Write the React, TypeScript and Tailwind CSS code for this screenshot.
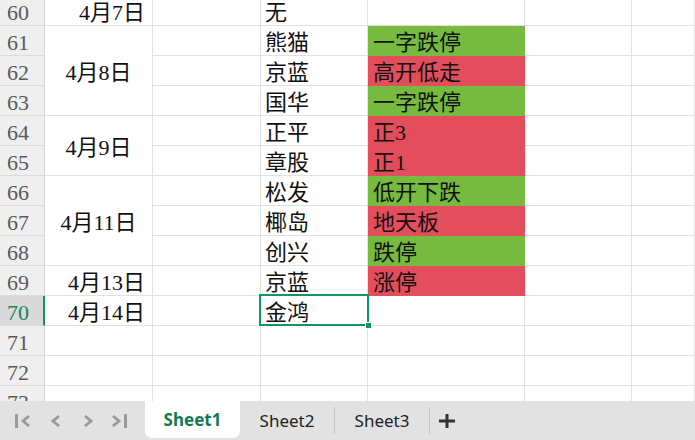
import React from "react";

type Fill = "g" | "r";
type Row = {
  n: number;
  b?: string;
  bSpan?: 1 | 2 | 3;
  bSkip?: boolean;
  d?: string;
  e?: [string, Fill];
  sel?: boolean;
};

const rows: Row[] = [
  { n: 60, b: "4月7日", d: "无" },
  { n: 61, b: "4月8日", bSpan: 3, d: "熊猫", e: ["一字跌停", "g"] },
  { n: 62, bSkip: true, d: "京蓝", e: ["高开低走", "r"] },
  { n: 63, bSkip: true, d: "国华", e: ["一字跌停", "g"] },
  { n: 64, b: "4月9日", bSpan: 2, d: "正平", e: ["正3", "r"] },
  { n: 65, bSkip: true, d: "章股", e: ["正1", "r"] },
  { n: 66, b: "4月11日", bSpan: 3, d: "松发", e: ["低开下跌", "g"] },
  { n: 67, bSkip: true, d: "椰岛", e: ["地天板", "r"] },
  { n: 68, bSkip: true, d: "创兴", e: ["跌停", "g"] },
  { n: 69, b: "4月13日", d: "京蓝", e: ["涨停", "r"] },
  { n: 70, b: "4月14日", d: "金鸿", sel: true },
  { n: 71 },
  { n: 72 },
  { n: 73 },
];

const spanCls: Record<number, string> = {
  1: "",
  2: "row-span-2",
  3: "row-span-3",
};

const fillCls: Record<Fill, string> = {
  g: "bg-[#76bb40] border-r-[#76bb40] border-b-[#76bb40]",
  r: "bg-[#e44d5c] border-r-[#e44d5c] border-b-[#e44d5c]",
};

const cell =
  "border-r border-b border-[#e1e1e1] flex items-center pt-[4px] text-[22px] leading-[22px] text-[#111] whitespace-nowrap overflow-hidden";

function FirstIcon() {
  return (
    <svg width="15" height="14" viewBox="0 0 15 14">
      <rect x="0" y="0" width="3" height="14" fill="#9a9a9a" />
      <polyline points="14,2 8,7 14,12" fill="none" stroke="#9a9a9a" strokeWidth="2.8" />
    </svg>
  );
}
function PrevIcon() {
  return (
    <svg width="9" height="14" viewBox="0 0 9 14">
      <polyline points="8,2 2,7 8,12" fill="none" stroke="#9a9a9a" strokeWidth="2.8" />
    </svg>
  );
}
function NextIcon() {
  return (
    <svg width="9" height="14" viewBox="0 0 9 14">
      <polyline points="1,2 7,7 1,12" fill="none" stroke="#9a9a9a" strokeWidth="2.8" />
    </svg>
  );
}
function LastIcon() {
  return (
    <svg width="15" height="14" viewBox="0 0 15 14">
      <polyline points="1,2 7,7 1,12" fill="none" stroke="#9a9a9a" strokeWidth="2.8" />
      <rect x="12" y="0" width="3" height="14" fill="#9a9a9a" />
    </svg>
  );
}
function PlusIcon() {
  return (
    <svg width="16" height="14" viewBox="0 0 16 14">
      <rect x="0" y="5.5" width="16" height="3" fill="#333" />
      <rect x="6.5" y="-1" width="3" height="16" fill="#333" />
    </svg>
  );
}

export default function App() {
  return (
    <div className="w-[695px] h-[440px] bg-white flex flex-col overflow-hidden [font-family:'Liberation_Serif','Noto_Sans_CJK_SC',serif]">
      <div className="h-[401px] overflow-hidden shrink-0">
        <div className="-mt-[4px] grid grid-cols-[45px_108px_108px_107px_157px_107px_1fr] auto-rows-[30px]">
          {rows.map((r) => (
            <React.Fragment key={r.n}>
              <div
                className={
                  r.sel
                    ? "flex items-center pt-[4px] pl-[7px] text-[22px] leading-[22px] bg-[#d9d9d9] text-[#13875a] border-b border-b-[#dcdcdc] border-r-2 border-r-[#13955f]"
                    : "flex items-center pt-[4px] pl-[7px] text-[22px] leading-[22px] bg-[#efefef] text-[#5a5a5a] border-b border-b-[#dcdcdc] border-r border-r-[#d8d8d8]"
                }
              >
                {r.n}
              </div>
              {!r.bSkip && (
                <div
                  className={`${cell} ${spanCls[r.bSpan ?? 1]} ${
                    r.bSpan && r.bSpan > 1 ? "justify-center" : "justify-end pr-[7px]"
                  }`}
                >
                  {r.b ?? ""}
                </div>
              )}
              <div className={cell}></div>
              <div className={`${cell} pl-[4px] relative overflow-visible`}>
                {r.d ?? ""}
                {r.sel && (
                  <div className="absolute -left-[2px] -top-[2px] w-[110px] h-[32px] border-2 border-[#13955f] pointer-events-none z-10">
                    <div className="absolute -right-[5px] -bottom-[5px] w-[7px] h-[7px] bg-[#13955f] border border-white" />
                  </div>
                )}
              </div>
              <div className={`${cell} pl-[5px] ${r.e ? fillCls[r.e[1]] : ""}`}>
                {r.e ? r.e[0] : ""}
              </div>
              <div className={cell}></div>
              <div className={cell}></div>
            </React.Fragment>
          ))}
        </div>
      </div>
      <div className="flex-1 bg-[#e2e2e2] flex items-stretch [font-family:'Noto_Sans',sans-serif]">
        <div className="w-[145px] flex items-center">
          <div className="ml-[15px] flex">
            <FirstIcon />
          </div>
          <div className="ml-[21px] flex">
            <PrevIcon />
          </div>
          <div className="ml-[24px] flex">
            <NextIcon />
          </div>
          <div className="ml-[19px] flex">
            <LastIcon />
          </div>
        </div>
        <div className="w-[95px] h-[37px] bg-white rounded-b-[7px] flex items-center justify-center text-[17px] font-bold text-[#117a52]">
          Sheet1
        </div>
        <div className="w-[94px] flex items-center justify-center text-[17px] text-[#222]">Sheet2</div>
        <div className="w-px my-[6px] bg-[#c4c4c4]" />
        <div className="w-[94px] flex items-center justify-center text-[17px] text-[#222]">Sheet3</div>
        <div className="w-px my-[6px] bg-[#c4c4c4]" />
        <div className="ml-[9px] flex items-center">
          <PlusIcon />
        </div>
      </div>
    </div>
  );
}
